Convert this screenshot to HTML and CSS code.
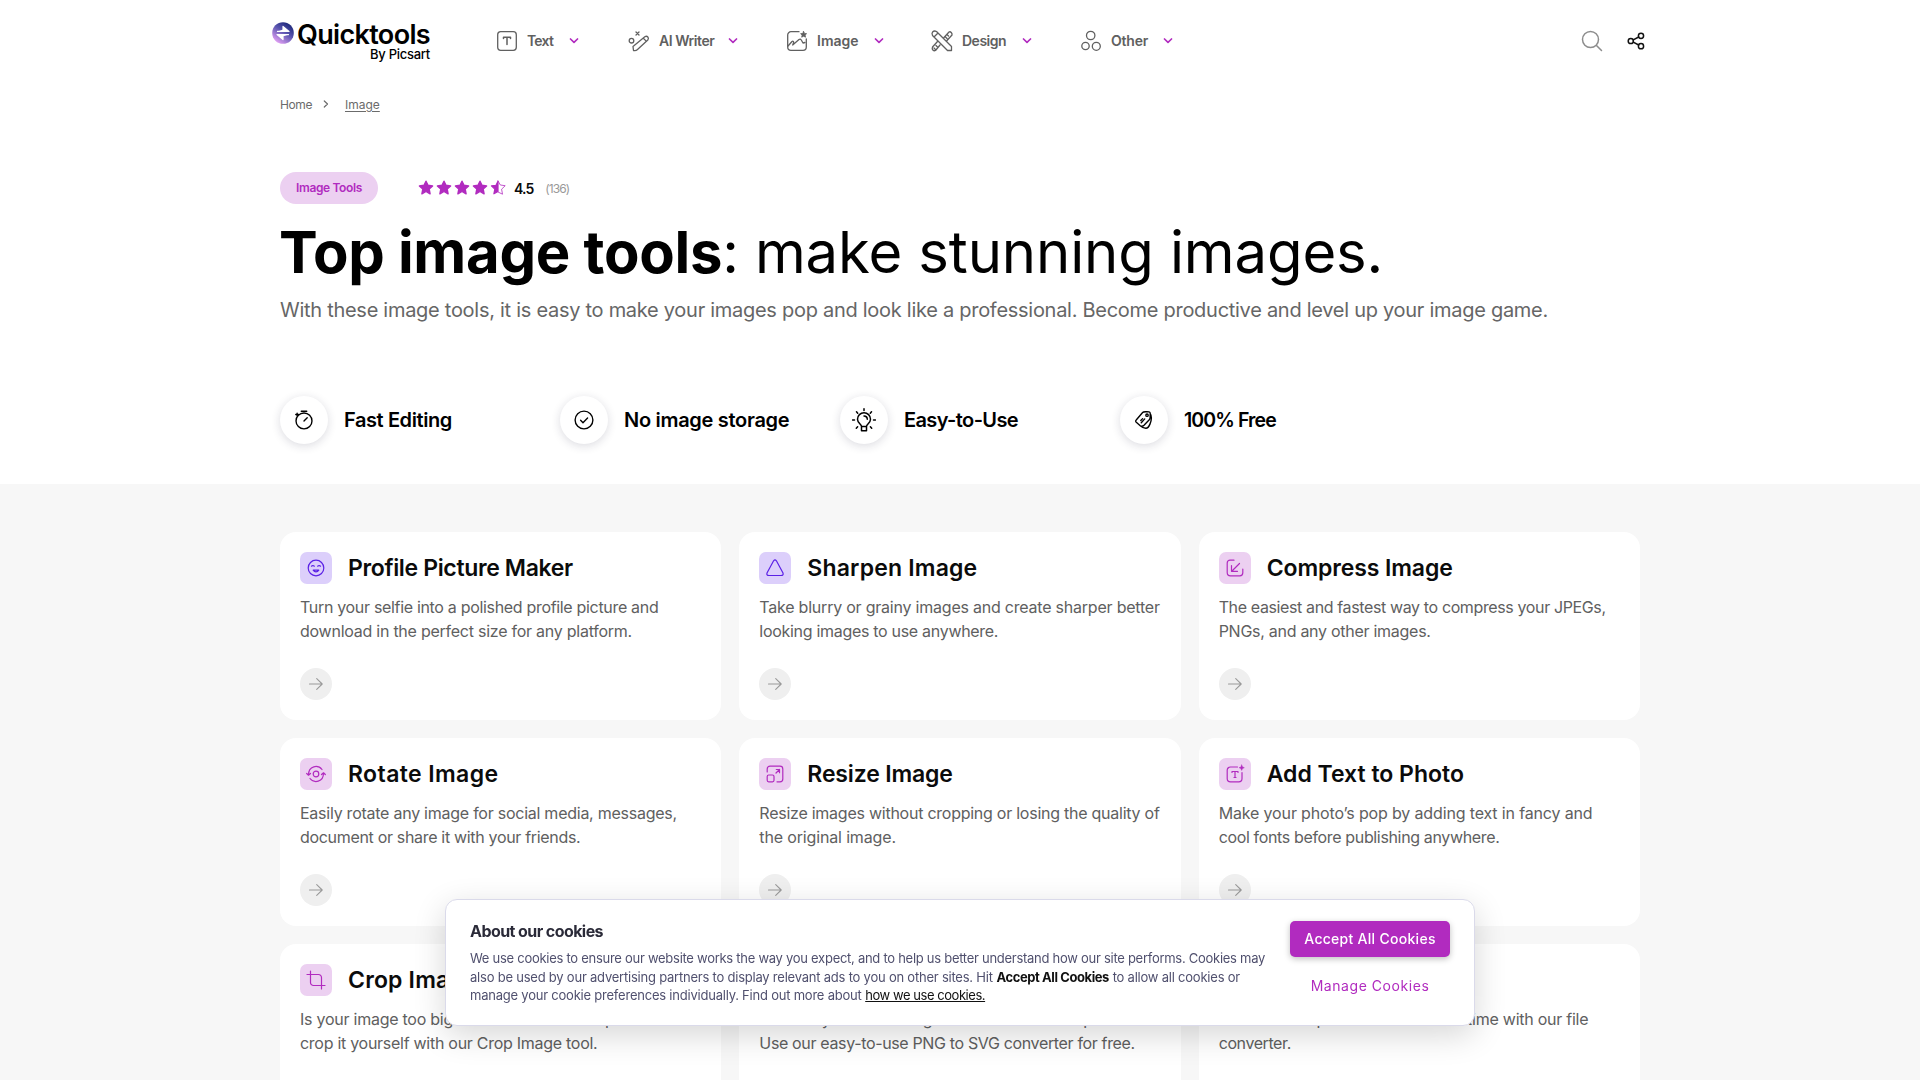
FILE: index.html
```html
<!DOCTYPE html>
<html lang="en">
<head>
<meta charset="utf-8">
<title>Quicktools by Picsart - Image Tools</title>
<link rel="stylesheet" href="styles.css">
</head>
<body>
<svg class="sprite" aria-hidden="true">
  <symbol id="chevron" viewBox="0 0 10 6"><path d="M1.500 1 5 4.300 8.500 1" fill="none" stroke="currentColor" stroke-width="1.700" stroke-linecap="round" stroke-linejoin="round"/></symbol>
  <symbol id="arrow" viewBox="0 0 16 16"><path d="M1.500 8h12.600M8.700 2.700 14.200 8l-5.500 5.300" fill="none" stroke="currentColor" stroke-width="1.100" stroke-linecap="round" stroke-linejoin="round"/></symbol>
  <symbol id="star" viewBox="0 0 16 16"><path d="M8 1.200 10 5.300l4.600.6-3.400 3.200.9 4.700L8 11.500 3.900 13.800l.9-4.700L1.400 5.900 6 5.300Z" fill="currentColor" stroke="currentColor" stroke-width="1.400" stroke-linejoin="round"/></symbol>
</svg>
<header class="header">
  <a class="logo">
    <svg class="logo__mark" viewBox="0 0 22 22"><defs><linearGradient id="lg" x1="0.8" y1="0.1" x2="0.2" y2="1"><stop offset="0" stop-color="#1f2a7c"/><stop offset=".4" stop-color="#5a55b0"/><stop offset="1" stop-color="#f0a8fb"/></linearGradient></defs><circle cx="11" cy="11" r="10.800" fill="url(#lg)"/><path d="M5.500 9.400h11.500L11 4.500v3M16.500 12.600H5l6 4.900v-3" fill="#fff" stroke="#fff" stroke-width="1.200"/></svg>
    <span class="logo__name"><b>Quicktools</b><small>By Picsart</small></span>
  </a>
  <nav class="nav">
    <a class="nav__item nav__item--text"><svg class="nav__icon" viewBox="0 0 24 24"><rect x="2.700" y="2.700" width="18.600" height="18.600" rx="3"/><path d="M8.500 9.500V8.300h7v1.200M12 8.300v7.200" stroke-width="1.500"/></svg><span class="nav__label">Text</span><svg class="nav__chev"><use href="#chevron"/></svg></a>
    <a class="nav__item nav__item--writer"><svg class="nav__icon" viewBox="0 0 24 24"><path d="m9 3 3 3m0-3L9 6M6.500 21.500l-.5-4L17.800 7.800c2.500-1.500 4.600 1 3 3.200L10.500 20.600C9 22 7.800 21.700 6.500 21.500ZM16.300 9.200l3.200 3.200"/><circle cx="4.500" cy="11.700" r="2.300"/></svg><span class="nav__label">AI Writer</span><svg class="nav__chev"><use href="#chevron"/></svg></a>
    <a class="nav__item nav__item--image"><svg class="nav__icon" viewBox="0 0 24 24"><path d="M14 2.700H6A3.300 3.300 0 0 0 2.700 6v12A3.300 3.300 0 0 0 6 21.300h12a3.300 3.300 0 0 0 3.300-3.300v-8"/><path d="m3 17 4-4.500c1-1 2 .3 1.500 1.500l-.8 2L14 10.500c1-.8 1.600-.5 2.300.5l1.700 3 2-.5"/><path d="m18.600 2.500.9 1.900 2.100.3-1.500 1.400.4 2.100-1.900-1-1.900 1 .4-2.100-1.500-1.400 2.100-.3Z" fill="currentColor" stroke-width=".8"/></svg><span class="nav__label">Image</span><svg class="nav__chev"><use href="#chevron"/></svg></a>
    <a class="nav__item nav__item--design"><svg class="nav__icon" viewBox="0 0 24 24"><path d="M2.500 6.500 17.500 21.500h4v-4L6.500 2.500C3.500 1 1 3.500 2.500 6.500ZM4 8l4-4M14 8.500l5-5.500c1.500-.8 3.500 1 3 3l-5 5.500M10 16l-4.500 5.500c-2 .8-4-1-3-3.500L7.500 12.500M17 5.500l1.500 1.500M15.500 8l1.500 1.500M6 16.500 7.500 18M4 19l1.200 1.200"/></svg><span class="nav__label">Design</span><svg class="nav__chev"><use href="#chevron"/></svg></a>
    <a class="nav__item nav__item--other"><svg class="nav__icon" viewBox="0 0 24 24"><circle cx="11.700" cy="6.500" r="4.200"/><circle cx="6.500" cy="17" r="3.700"/><circle cx="17.300" cy="17.300" r="4"/></svg><span class="nav__label">Other</span><svg class="nav__chev"><use href="#chevron"/></svg></a>
  </nav>
  <div class="header__tools">
    <svg class="search" viewBox="0 0 22 22"><circle cx="9.500" cy="9.500" r="8"/><path d="m15.500 15.500 5 5"/></svg>
    <svg class="share" viewBox="0 0 18 18"><circle cx="3.800" cy="9" r="2.600"/><circle cx="14" cy="3.800" r="2.600"/><circle cx="14" cy="14.200" r="2.600"/><path d="m6.200 7.800 5.500-2.800M6.200 10.200l5.500 2.800"/></svg>
  </div>
</header>
<main>
  <section class="hero">
    <div class="crumbs"><span class="k40">Home</span><svg viewBox="0 0 6 8"><path d="M1.300 1 4.500 4 1.300 7"/></svg><u>Image</u></div>
    <div class="meta">
      <span class="pill">Image Tools</span>
      <div class="stars"><svg><use href="#star"/></svg><svg><use href="#star"/></svg><svg><use href="#star"/></svg><svg><use href="#star"/></svg><svg viewBox="0 0 16 16"><path d="M8 1.200V11.500L3.900 13.800l.9-4.700L1.400 5.900 6 5.300Z" fill="currentColor" stroke="currentColor" stroke-width="1.200" stroke-linejoin="round"/><path d="M8 .8 10.300 5l4.900.7-3.600 3.500.9 5L8 12" fill="none" stroke="currentColor" stroke-width=".8" stroke-linejoin="round"/></svg></div>
      <b class="score">4.5</b><span class="votes">(136)</span>
    </div>
    <h1 class="title"><b>Top image tools</b><span>: make stunning images.</span></h1>
    <p class="lead">With these image tools, it is easy to make your images pop and look like a professional. Become productive and level up your image game.</p>
    <ul class="perks">
      <li><i><svg viewBox="0 0 24 24"><circle cx="12" cy="13" r="8.700"/><path d="M9 2.500h6M12 13l3.500-3.500M4.500 4.500v3M3 6h3"/></svg></i><span class="k40">Fast Editing</span></li>
      <li><i><svg viewBox="0 0 24 24"><circle cx="12" cy="12" r="9.700"/><path d="m8.300 12.300 2.600 2.600 5-5"/></svg></i><span class="k30">No image storage</span></li>
      <li><i><svg viewBox="0 0 24 24"><path d="M9.500 18.500C9.500 16 5.500 15 5.500 11.200a6.500 6.500 0 0 1 13 0c0 3.800-4 4.800-4 7.300ZM9.500 18.500v4.200h5v-4.200M12 8a3.300 3.300 0 0 1 3.300 3.300M12 .8v1.800M4.500 3.800l1.200 1.400M19.500 3.800l-1.200 1.400M.5 12h2M21.500 12h2M4.300 20.200l1.300-1.400M19.700 20.200l-1.300-1.400"/></svg></i><span class="k60">Easy-to-Use</span></li>
      <li><i><svg viewBox="0 0 24 24"><path d="M3.500 12 10.500 3.800c.8-.9 5.500-1 7-.6 1 .3 1.300 1 1.300 1.800 0 2 .2 5.200-.8 6.500l-6 6.300c-1.500 1.500-3 1.300-4.400.2l-3.700-3.200c-1.200-1-1.300-1.900-.4-2.800ZM18.800 5c1.700 2.500 1.500 7-.3 11.500-1 2.500-2.200 4.500-4.500 4.500-2 0-4-.8-6.500-3M8.500 12.500l2-2M9 15l3.800-4.200"/><circle cx="15.300" cy="6.700" r="1.300"/></svg></i><span class="k100">100% Free</span></li>
    </ul>
  </section>
  <section class="catalog">
    <div class="grid">
      <article class="card card--violet"><h2><i><svg viewBox="0 0 20 20"><circle cx="10" cy="10" r="7.800"/><path d="M5.500 8.200c.8-.9 2-.9 2.800 0M11.700 8.200c.8-.9 2-.9 2.800 0M7.200 12.200c1.500 2.300 4.100 2.300 5.600 0Z"/></svg></i><span class="k35">Profile Picture Maker</span></h2><p><span class="k32">Turn your selfie into a polished profile picture and</span><span>download in the perfect size for any platform.</span></p><svg class="go"><use href="#arrow"/></svg></article>
      <article class="card card--violet"><h2><i><svg viewBox="0 0 20 20"><path d="M8.600 2.800Q10 1 11.400 2.800L18 15q.8 2.500-2 2.500H4Q1.200 17.500 2 15Z"/></svg></i><span class="p18">Sharpen Image</span></h2><p><span class="k22">Take blurry or grainy images and create sharper better</span><span class="k30">looking images to use anywhere.</span></p><svg class="go"><use href="#arrow"/></svg></article>
      <article class="card"><h2><i><svg viewBox="0 0 20 20"><path d="M9 2.200H5A2.800 2.800 0 0 0 2.200 5v9.500A3.300 3.300 0 0 0 5.500 17.800h9.300a3 3 0 0 0 3-3V11M14.500 5.500 7 13M6.500 7.500v5.800h6"/></svg></i><span class="k10">Compress Image</span></h2><p><span class="k37">The easiest and fastest way to compress your JPEGs,</span><span class="k27">PNGs, and any other images.</span></p><svg class="go"><use href="#arrow"/></svg></article>
      <article class="card"><h2><i><svg viewBox="0 0 20 20"><circle cx="10" cy="10" r="2.800"/><path d="M2.500 11C2.500 1.500 12 .5 16 5.500M17.500 9C17.500 18.500 8 19.500 4 14.500M.7 9.500 2.500 11.200 4.500 9.500M15.500 10.500 17.500 8.800l1.800 1.700"/></svg></i><span class="p40">Rotate Image</span></h2><p><span>Easily rotate any image for social media, messages,</span><span class="k32">document or share it with your friends.</span></p><svg class="go"><use href="#arrow"/></svg></article>
      <article class="card"><h2><i><svg viewBox="0 0 20 20"><path d="M2.200 8V5A2.800 2.800 0 0 1 5 2.200h10A2.800 2.800 0 0 1 17.800 5v10a2.800 2.800 0 0 1-2.800 2.800h-3M11 9l3.500-3.500M11.300 5.500h3.200v3.200"/><rect x="2.200" y="11" width="6.800" height="6.800" rx="1.500"/></svg></i><span class="k15">Resize Image</span></h2><p><span>Resize images without cropping or losing the quality of</span><span class="k15">the original image.</span></p><svg class="go"><use href="#arrow"/></svg></article>
      <article class="card"><h2><i><svg viewBox="0 0 20 20"><path d="M12.500 3H5.500A3.300 3.300 0 0 0 2.200 6.300v8.200A3.300 3.300 0 0 0 5.500 17.800h8.200A3.300 3.300 0 0 0 17 14.500V8.500M7 8.500V7.500h6v1M10 7.500v6M9 13.500h2"/><path d="m16.700 1 .8 1.900 1.800.8-1.800.8-.8 1.900-.8-1.900-1.800-.8 1.800-.8Z" fill="currentColor" stroke-width=".5"/></svg></i><span>Add Text to Photo</span></h2><p><span class="k15">Make your photo’s pop by adding text in fancy and</span><span class="k35">cool fonts before publishing anywhere.</span></p><svg class="go"><use href="#arrow"/></svg></article>
      <article class="card"><h2><i><svg viewBox="0 0 20 20"><path d="M4.500 1v11.500a3 3 0 0 0 3 3H19M1 4.500h11.500a3 3 0 0 1 3 3V19"/></svg></i><span class="p18">Crop Image</span></h2><p><span>Is your image too big for the social media post? You can</span><span class="k27">crop it yourself with our Crop Image tool.</span></p><svg class="go"><use href="#arrow"/></svg></article>
      <article class="card"><h2><i></i><span>PNG to SVG</span></h2><p><span>Convert your PNG images to vectors in a step.</span><span class="k35">Use our easy-to-use PNG to SVG converter for free.</span></p><svg class="go"><use href="#arrow"/></svg></article>
      <article class="card"><h2><i></i><span>File Converter</span></h2><p><span>Convert multiple files at the same time with our file</span><span class="k40">converter.</span></p><svg class="go"><use href="#arrow"/></svg></article>
    </div>
  </section>
</main>
<aside class="cookies">
  <div class="cookies__body">
    <h3>About our cookies</h3>
    <p><span class="k27">We use cookies to ensure our website works the way you expect, and to help us better understand how our site performs. Cookies may</span><br><span class="k22">also be used by our advertising partners to display relevant ads to you on other sites. Hit</span> <b class="k40">Accept All Cookies</b> <span class="k22">to allow all cookies or</span><br><span class="k22">manage your cookie preferences individually. Find out more about</span>&nbsp;<u class="k45">how we use cookies.</u></p>
  </div>
  <div class="cookies__actions"><button class="btn btn--primary">Accept All Cookies</button><button class="btn btn--link">Manage Cookies</button></div>
</aside>
</body>
</html>
```
FILE: styles.css
```css
* { box-sizing: border-box; margin: 0; padding: 0; }
body { font-family: Inter, "Open Sans", sans-serif; background: #fff; color: #0b0b0b; height: 1080px; overflow: hidden; -webkit-font-smoothing: antialiased; }
svg { display: block; fill: none; stroke: currentColor; stroke-linecap: round; stroke-linejoin: round; }
svg use { stroke: none; }
.sprite { display: none; }
i { font-style: normal; }

.header { display: flex; height: 80px; padding-left: 272px; align-items: flex-start; white-space: nowrap; }
.logo { display: flex; width: 223px; padding-top: 22px; gap: 1px; color: #000; }
.logo__mark { flex: none; width: 22px; height: 22px; stroke: none; }
.logo__name { display: flex; flex-direction: column; width: 135px; align-items: flex-end; }
.logo__name b { font-size: 27px; line-height: 25px; font-weight: 600; letter-spacing: -.66px; }
.logo__name small { font-size: 13px; line-height: 14px; font-weight: 500; letter-spacing: -.27px; }
.nav { display: flex; height: 81px; align-items: center; color: #606060; }
.nav__item { display: flex; align-items: center; font-size: 14px; font-weight: 600; }
.nav__icon { flex: none; width: 24px; height: 24px; margin-right: 8px; stroke-width: 1.300; }
.nav__label { flex: none; }
.nav__chev { width: 10px; height: 6px; color: #b12bbf; margin-left: auto; }
.nav__item--text { width: 84px; margin-right: 48px; letter-spacing: -.8px; }
.nav__item--writer { width: 111px; margin-right: 47px; letter-spacing: -.45px; }
.nav__item--image { width: 99px; margin-right: 46px; }
.nav__item--design { width: 102px; margin-right: 47px; letter-spacing: -.5px; }
.nav__item--other { width: 94px; letter-spacing: -.22px; }
.header__tools { display: flex; height: 81px; margin-left: auto; padding-right: 275px; align-items: center; gap: 24px; }
.search { width: 22px; height: 22px; color: #8d8d8d; stroke-width: 1.500; }
.share { width: 18px; height: 18px; color: #111; stroke-width: 1.500; }

.hero { height: 404px; padding: 0 280px; white-space: nowrap; }
.crumbs { display: flex; height: 48px; align-items: center; font-size: 12px; color: #6b6b6b; }
.crumbs svg { width: 6px; height: 8px; margin: 0 16px 0 11px; stroke-width: 1.200; }
.crumbs u { text-underline-offset: 2px; }
.meta { display: flex; height: 32px; margin-top: 44px; align-items: center; }
.pill { width: 98px; height: 32px; border-radius: 16px; background: #ecd0f1; color: #b12bbf; font-size: 12px; font-weight: 600; line-height: 32px; letter-spacing: -.36px; text-align: center; }
.stars { display: flex; gap: 2px; margin-left: 40px; color: #b12bbf; }
.stars svg { width: 16px; height: 16px; }
.score { margin-left: 8px; font-size: 14px; font-weight: 600; letter-spacing: -.9px; }
.votes { margin-left: 12px; font-size: 12px; letter-spacing: -.9px; color: #999; }
.title { margin: 12px 0 0 -1px; font-size: 58px; line-height: 72px; font-weight: 400; letter-spacing: -.12px; color: #000; }
.title b { letter-spacing: -.28px; }
.lead { margin-top: 7px; font-size: 20px; line-height: 30px; letter-spacing: -.278px; color: #666; }
.perks { display: flex; margin-top: 71px; list-style: none; }
.perks li { display: flex; width: 280px; align-items: center; gap: 16px; font-size: 20px; font-weight: 600; color: #000; }
.perks i { display: grid; width: 48px; height: 48px; place-items: center; border-radius: 50%; background: #fff; box-shadow: 0 2px 10px rgba(30, 30, 60, .16); }
.perks svg { width: 22px; height: 22px; stroke-width: 1.500; }
.perks li:nth-child(3) svg { width: 24px; height: 24px; }
.perks li:nth-child(4) span { font-size: 19.500px; }

.catalog { height: 596px; padding: 48px 280px 0; background: #f7f7f7; overflow: hidden; }
.grid { display: grid; grid-template-columns: repeat(3, minmax(0, 1fr)); grid-auto-rows: 188px; gap: 18px; }
.card { padding: 20px; border-radius: 16px; background: #fff; white-space: nowrap; }
.card h2 { display: flex; height: 32px; align-items: center; gap: 16px; font-size: 23px; font-weight: 600; color: #0b0b0b; }
.card i { display: grid; flex: none; width: 32px; height: 32px; place-items: center; border-radius: 7px; background: #ecd0f1; color: #b12bbf; }
.card--violet i { background: #dccffb; color: #5b21e6; }
.card i svg { width: 20px; height: 20px; stroke-width: 1.200; }
.card p { margin: 11px 0 25px; font-size: 16px; line-height: 24px; letter-spacing: -.25px; color: #606060; }
.card p span { display: block; width: max-content; }
.go { width: 32px; height: 32px; padding: 8px; border-radius: 50%; background: #efefef; color: #999; }

.cookies { position: fixed; left: 445px; top: 899px; display: flex; width: 1030px; height: 127px; padding: 21px 24px; justify-content: space-between; border: 1px solid #dadaea; border-radius: 12px; background: #fff; box-shadow: 0 9px 32px rgba(2, 2, 3, .16); white-space: nowrap; }
.cookies h3 { font-size: 16px; line-height: 20px; font-weight: 700; letter-spacing: -.57px; color: #2a2a38; }
.cookies p { margin-top: 8px; font-size: 13px; line-height: 18.500px; color: #50506e; }
.cookies p b, .cookies p u { color: #111; }
.cookies__actions { display: flex; flex-direction: column; gap: 11px; }
.btn { width: 160px; height: 36px; border: 0; border-radius: 5px; background: none; color: #b12bbf; font: 400 14px/36px Inter, sans-serif; letter-spacing: .55px; }
.btn--primary { background: #b12bbf; color: #fff; font-weight: 500; letter-spacing: .28px; box-shadow: 0 2px 6px rgba(0, 0, 0, .25); }

/* Tracking utilities: k = tighter, p = wider, in hundredths of a pixel */
.k10 { letter-spacing: -.11px; }
.k15 { letter-spacing: -.15px; }
.k22 { letter-spacing: -.22px; }
.k27 { letter-spacing: -.275px; }
.k30 { letter-spacing: -.3px; }
.k32 { letter-spacing: -.32px; }
.k35 { letter-spacing: -.35px; }
.k37 { letter-spacing: -.375px; }
.k40 { letter-spacing: -.41px; }
.k45 { letter-spacing: -.45px; }
.k60 { letter-spacing: -.61px; }
.k100 { letter-spacing: -.9px; }
.p18 { letter-spacing: .18px; }
.p40 { letter-spacing: .4px; }
```
